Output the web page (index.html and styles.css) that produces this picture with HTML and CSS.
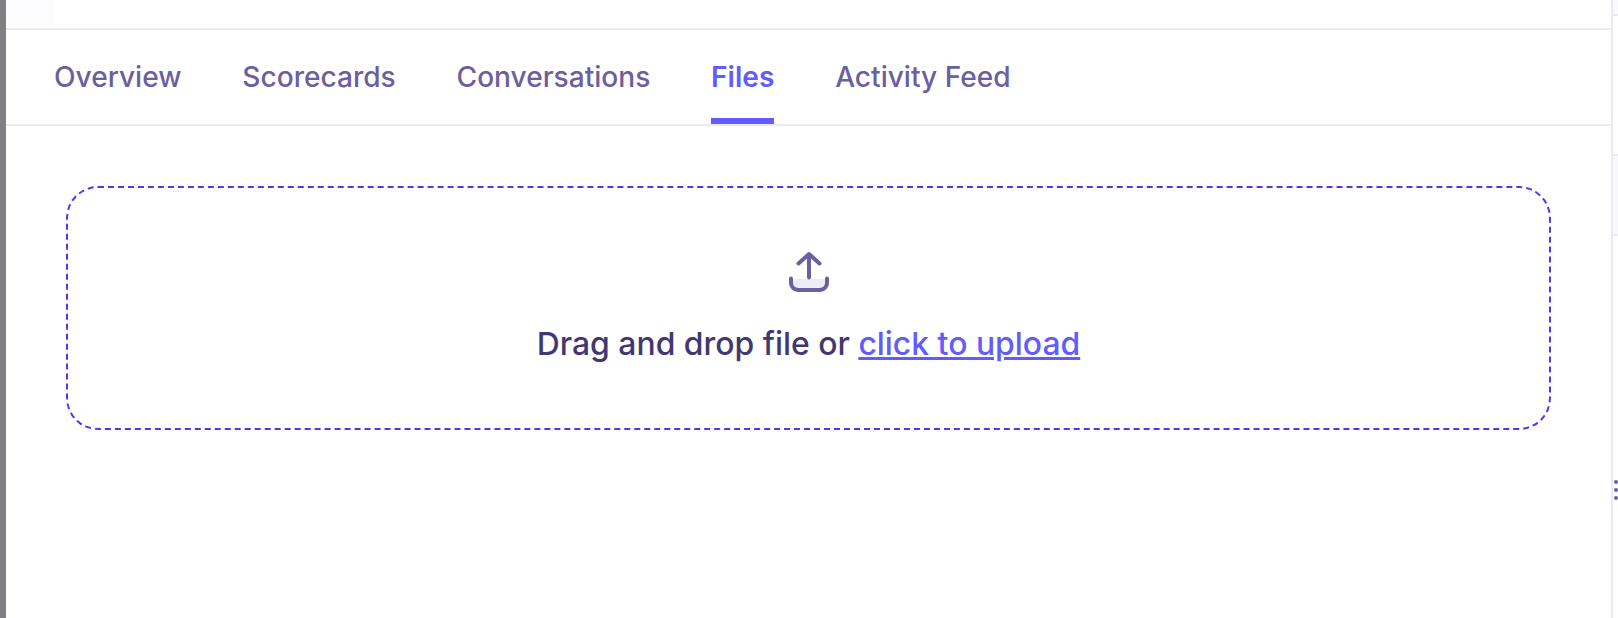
FILE: index.html
```html
<!DOCTYPE html>
<html lang="en">
<head>
<meta charset="utf-8">
<title>Files</title>
<link rel="stylesheet" href="styles.css">
</head>
<body>
<div class="shell">
  <div class="edge"></div>
  <main class="main">
    <div class="topbar"><div class="ghost"></div></div>
    <nav class="tabs">
      <a class="tab">Overview</a>
      <a class="tab">Scorecards</a>
      <a class="tab">Conversations</a>
      <a class="tab active">Files</a>
      <a class="tab">Activity Feed</a>
    </nav>
    <section class="content">
      <div class="drop">
        <svg class="icon" width="42" height="42" viewBox="0 0 42 42" fill="none">
          <path d="M3 28h36v4a7 7 0 0 1-7 7H10a7 7 0 0 1-7-7z" fill="#edecf5"/>
          <path d="M3 27.500V32a7 7 0 0 0 7 7h22a7 7 0 0 0 7-7v-4.500" stroke="#6b5f9f" stroke-width="4" stroke-linecap="round"/>
          <path d="M21 26.500V3.500M10.500 12.500 21 3l10.500 9.500" stroke="#6b5f9f" stroke-width="4" stroke-linecap="round" stroke-linejoin="round"/>
        </svg>
        <p class="drop-text">Drag and drop file or <a class="link">click to upload</a></p>
      </div>
    </section>
  </main>
  <aside class="rail">
    <div class="rail-top"></div>
    <div class="rail-gap"></div>
    <div class="rail-pale"></div>
    <div class="handle"><i></i><i></i><i></i></div>
  </aside>
</div>
</body>
</html>
```
FILE: styles.css
```css
* { box-sizing: border-box; }
html, body { margin: 0; height: 100%; background: #fff; overflow: hidden; }
body { font-family: Inter, "Liberation Sans", sans-serif; }
.shell { display: flex; height: 618px; }
.edge { width: 6px; background: #808084; flex: none; }
.main { width: 1605px; flex: none; display: flex; flex-direction: column; }
.topbar { height: 30px; border-bottom: 2px solid #ecebf4; flex: none; padding-left: 1px; }
.ghost { width: 48px; height: 26px; background: #fdfdff; }
.tabs { height: 96px; flex: none; display: flex; gap: 60.800px; padding-left: 48px; border-bottom: 2px solid #ecebf4; }
.tab { display: flex; align-items: center; height: 94px; font-size: 28.100px; font-weight: 500; color: #6b5f9f; border-bottom: 6px solid transparent; border-top: 6px solid transparent; }
.tab.active { color: #625cff; font-weight: 600; border-bottom-color: #625cff; }
.content { padding: 60px 60px 0 60px; }
.drop { height: 244px; border: 2px dashed #5433f5; border-radius: 32px; display: flex; flex-direction: column; align-items: center; padding-top: 63px; }
.icon { display: block; }
.drop-text { margin: 31px 0 0; font-size: 31.900px; line-height: 40px; font-weight: 500; color: #413872; }
.link { color: #625cff; text-decoration: underline; text-decoration-thickness: 2.500px; }
.rail { position: relative; width: 7px; flex: none; border-left: 2px solid #ecebf4; display: flex; flex-direction: column; }
.rail-top { height: 16px; background: #fafafd; border-bottom: 2px solid #ecebf4; flex: none; }
.rail-gap { height: 138px; flex: none; }
.rail-pale { height: 82px; background: #f7f7fc; border-top: 2px solid #ecebf4; border-bottom: 2px solid #ecebf4; flex: none; }
.handle { position: absolute; left: 1px; top: 480px; display: flex; flex-direction: column; gap: 4px; }
.handle i { display: block; width: 4px; height: 4px; border-radius: 50%; background: #6b5f9f; }
```
